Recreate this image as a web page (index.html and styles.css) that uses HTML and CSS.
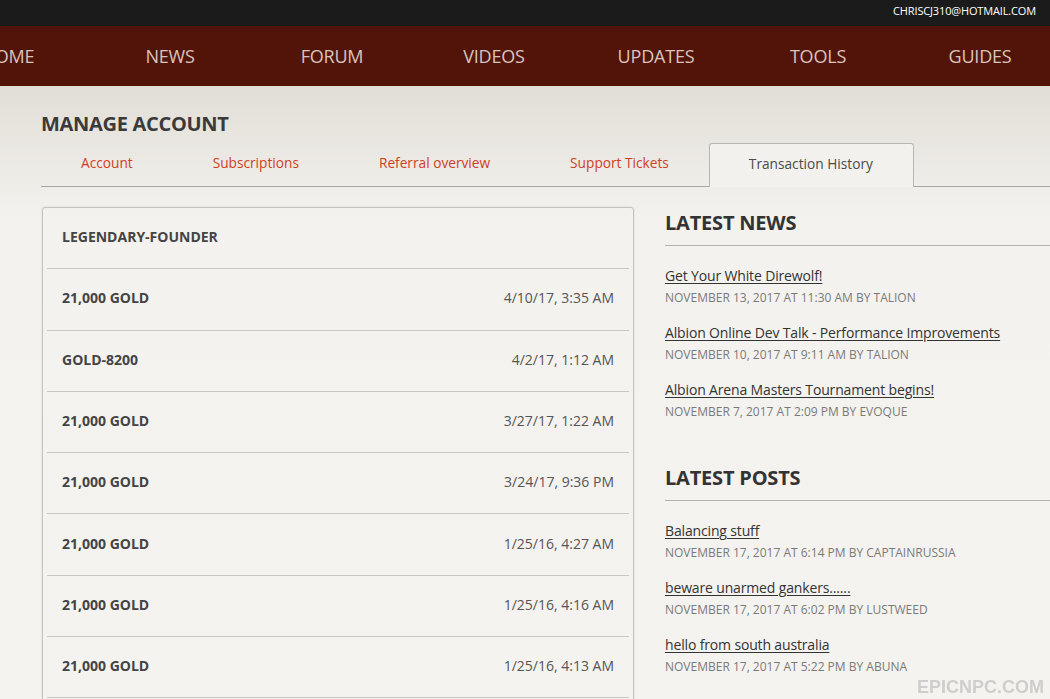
FILE: index.html
```html
<!DOCTYPE html>
<html lang="en">
<head>
    <meta charset="UTF-8">
    <title>Manage Account</title>
    <link rel="stylesheet" href="styles.css">
</head>
<body>
    <div class="topbar">
        <span class="user">CHRISCJ310@HOTMAIL.COM</span>
    </div>

    <nav class="mainnav">
        <a href="#">HOME</a>
        <a href="#">NEWS</a>
        <a href="#">FORUM</a>
        <a href="#">VIDEOS</a>
        <a href="#">UPDATES</a>
        <a href="#">TOOLS</a>
        <a href="#">GUIDES</a>
    </nav>

    <div class="page">
        <h1 class="title">MANAGE ACCOUNT</h1>

        <ul class="tabs">
            <li><a href="#">Account</a></li>
            <li><a href="#">Subscriptions</a></li>
            <li><a href="#">Referral overview</a></li>
            <li><a href="#">Support Tickets</a></li>
            <li class="active"><a href="#">Transaction History</a></li>
        </ul>

        <div class="content">
            <div class="history">
                <div class="row"><span class="item">LEGENDARY-FOUNDER</span></div>
                <div class="row"><span class="item">21,000 GOLD</span><span class="date">4/10/17, 3:35 AM</span></div>
                <div class="row"><span class="item">GOLD-8200</span><span class="date">4/2/17, 1:12 AM</span></div>
                <div class="row"><span class="item">21,000 GOLD</span><span class="date">3/27/17, 1:22 AM</span></div>
                <div class="row"><span class="item">21,000 GOLD</span><span class="date">3/24/17, 9:36 PM</span></div>
                <div class="row"><span class="item">21,000 GOLD</span><span class="date">1/25/16, 4:27 AM</span></div>
                <div class="row"><span class="item">21,000 GOLD</span><span class="date">1/25/16, 4:16 AM</span></div>
                <div class="row"><span class="item">21,000 GOLD</span><span class="date">1/25/16, 4:13 AM</span></div>
            </div>

            <div class="sidebar">
                <div class="block">
                    <h2>LATEST NEWS</h2>
                    <div class="entry">
                        <a href="#">Get Your White Direwolf!</a>
                        <p>NOVEMBER 13, 2017 AT 11:30 AM BY TALION</p>
                    </div>
                    <div class="entry">
                        <a href="#">Albion Online Dev Talk - Performance Improvements</a>
                        <p>NOVEMBER 10, 2017 AT 9:11 AM BY TALION</p>
                    </div>
                    <div class="entry">
                        <a href="#">Albion Arena Masters Tournament begins!</a>
                        <p>NOVEMBER 7, 2017 AT 2:09 PM BY EVOQUE</p>
                    </div>
                </div>

                <div class="block">
                    <h2>LATEST POSTS</h2>
                    <div class="entry">
                        <a href="#">Balancing stuff</a>
                        <p>NOVEMBER 17, 2017 AT 6:14 PM BY CAPTAINRUSSIA</p>
                    </div>
                    <div class="entry">
                        <a href="#">beware unarmed gankers......</a>
                        <p>NOVEMBER 17, 2017 AT 6:02 PM BY LUSTWEED</p>
                    </div>
                    <div class="entry">
                        <a href="#">hello from south australia</a>
                        <p>NOVEMBER 17, 2017 AT 5:22 PM BY ABUNA</p>
                    </div>
                </div>
            </div>
        </div>
    </div>

    <div class="watermark">EPICNPC.COM</div>
</body>
</html>
```

FILE: styles.css
```css
html, body {
    margin: 0;
    padding: 0;
    overflow: hidden;
}

body {
    font-family: "Open Sans", "Liberation Sans", sans-serif;
    background: linear-gradient(#e1ded7 86px, #f4f2ee 220px, #f5f3ef);
    min-height: 699px;
    color: #3b3b3b;
}

a {
    text-decoration: none;
    color: inherit;
}

.topbar {
    height: 26px;
    background-color: #1b1b1b;
    display: flex;
    justify-content: flex-end;
    align-items: center;
    padding-right: 14px;
}

.user {
    color: #fff;
    font-size: 11px;
    letter-spacing: -0.15px;
    line-height: 1;
    margin-top: -5px;
}

.mainnav {
    height: 60px;
    background-color: #521409;
    display: flex;
    align-items: center;
    margin-left: -73px;
    width: 1200px;
}

.mainnav a {
    width: 162px;
    text-align: center;
    color: #d9c4bc;
    font-size: 18px;
    letter-spacing: -0.2px;
}

.page {
    width: 1040px;
    margin-left: 41px;
}

.title {
    margin: 0;
    padding-top: 26px;
    height: 30px;
    font-size: 20px;
    font-weight: 700;
    letter-spacing: -0.3px;
    line-height: 24px;
    color: #3a3a3a;
}

.tabs {
    list-style: none;
    margin: 0;
    padding: 0;
    margin-top: 1px;
    display: flex;
    border-bottom: 1px solid #a9a7a3;
    height: 43px;
}

.tabs li {
    padding: 10px 40px 0;
    font-size: 13.7px;
    line-height: 20px;
    color: #d0401f;
}

.tabs li.active {
    border: 1px solid #b8b6b2;
    border-bottom: none;
    border-radius: 3px 3px 0 0;
    background-color: #f3f1ed;
    color: #4a4a4a;
    margin-bottom: -1px;
    padding: 10px 40px 0 39px;
}

.content {
    display: grid;
    grid-template-columns: 593px 1fr;
    gap: 31px;
    margin-top: 20px;
}

.history {
    border: 1px solid #c5c3bf;
    border-radius: 3px;
    box-shadow: 0 0 2px rgba(0, 0, 0, 0.12);
    margin-left: 1px;
    padding: 0 4px;
    height: 600px;
}

.row {
    height: 57.3px;
    padding: 0 15px 3px;
    display: flex;
    justify-content: space-between;
    align-items: center;
    border-bottom: 1px solid #c9c7c3;
    font-size: 14px;
}

.item {
    font-weight: 700;
    color: #444;
}

.date {
    color: #555;
}

.sidebar {
    padding-top: 2px;
}

.block {
    margin-bottom: 43px;
}

.block h2 {
    margin: 0;
    font-size: 20px;
    font-weight: 700;
    letter-spacing: -0.2px;
    line-height: 28px;
    color: #333;
    padding-bottom: 8px;
    border-bottom: 1px solid #b3b1ad;
    margin-bottom: 18px;
}

.entry {
    margin-bottom: 14px;
}

.entry a {
    display: inline-block;
    font-size: 14px;
    letter-spacing: -0.15px;
    line-height: 20px;
    color: #333;
    text-decoration: underline;
    text-underline-offset: 2px;
}

.entry p {
    margin: 3px 0 0;
    font-size: 12px;
    line-height: 18px;
    color: #7a7a7a;
}

.watermark {
    position: fixed;
    right: 6px;
    bottom: 1px;
    font-family: "Liberation Sans", sans-serif;
    font-weight: 700;
    font-size: 18px;
    color: rgba(190, 190, 190, 0.7);
}
```
